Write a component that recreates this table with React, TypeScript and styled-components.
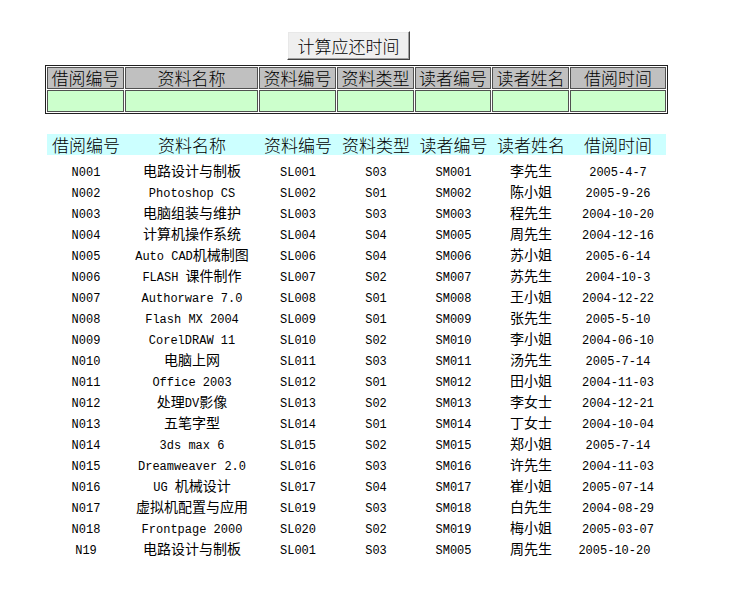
import React from 'react';
import styled, { createGlobalStyle } from 'styled-components';

const Global = createGlobalStyle`
  html, body { margin: 0; padding: 0; background: #ffffff; }
  body {
    font-family: "Noto Sans CJK SC", "Liberation Sans", sans-serif;
    color: #000000;
  }
`;

const Page = styled.div`
  width: 746px;
  min-height: 597px;
  box-sizing: border-box;
  padding: 31px 0 0 45px;
`;

const ButtonRow = styled.div`
  display: flex;
  padding-left: 242px;
`;

const CalcButton = styled.button`
  width: 123px;
  height: 29px;
  box-sizing: border-box;
  margin: 0;
  padding: 0;
  background: #efefef;
  border: 1px solid;
  border-color: #ffffff #404040 #404040 #ffffff;
  box-shadow: inset -1px -1px 0 #a0a0a0, inset 1px 1px 0 #e8e8e8;
  font-family: "Noto Sans CJK SC", sans-serif;
  font-weight: 300;
  font-size: 17px;
  line-height: 25px;
  color: #000;
`;

const topCols = '77px 133px 77px 77px 76px 77px 96px';
const listCols = '78px 134px 78px 78px 77px 78px 96px';

const FormTable = styled.div`
  display: grid;
  grid-template-columns: ${topCols};
  gap: 1px;
  padding: 1px;
  border: 1px solid #202020;
  width: max-content;
  margin-top: 5px;
`;

const FormCell = styled.div<{ $head?: boolean }>`
  box-sizing: border-box;
  height: 22px;
  border: 1px solid #505050;
  background: ${p => (p.$head ? '#c0c0c0' : '#ccffcc')};
  font-weight: 300;
  font-size: 17px;
  line-height: 20px;
  text-align: center;
  white-space: nowrap;
`;

const ListTable = styled.div`
  margin: 20px 0 0 2px;
  width: 619px;
`;

const ListHead = styled.div`
  display: grid;
  grid-template-columns: ${listCols};
  height: 21px;
  background: #ccffff;
`;

const HeadText = styled.div`
  font-weight: 300;
  font-size: 17px;
  line-height: 21px;
  text-align: center;
  white-space: nowrap;
`;

const ListBody = styled.div`
  padding-top: 5px;
`;

const ListRow = styled.div`
  display: grid;
  grid-template-columns: ${listCols};
  height: 21px;
`;

const DataCell = styled.div`
  font-size: 14px;
  line-height: 21px;
  text-align: center;
  white-space: pre;
`;

const Mono = styled.span`
  font-family: "Liberation Mono", monospace;
  font-size: 12px;
`;

const headers = ['借阅编号', '资料名称', '资料编号', '资料类型', '读者编号', '读者姓名', '借阅时间'];

const rows: string[][] = [
  ['N001', '电路设计与制板', 'SL001', 'S03', 'SM001', '李先生', '2005-4-7'],
  ['N002', 'Photoshop CS', 'SL002', 'S01', 'SM002', '陈小姐', '2005-9-26'],
  ['N003', '电脑组装与维护', 'SL003', 'S03', 'SM003', '程先生', '2004-10-20'],
  ['N004', '计算机操作系统', 'SL004', 'S04', 'SM005', '周先生', '2004-12-16'],
  ['N005', 'Auto CAD机械制图', 'SL006', 'S04', 'SM006', '苏小姐', '2005-6-14'],
  ['N006', 'FLASH 课件制作', 'SL007', 'S02', 'SM007', '苏先生', '2004-10-3'],
  ['N007', 'Authorware 7.0', 'SL008', 'S01', 'SM008', '王小姐', '2004-12-22'],
  ['N008', 'Flash MX 2004', 'SL009', 'S01', 'SM009', '张先生', '2005-5-10'],
  ['N009', 'CorelDRAW 11', 'SL010', 'S02', 'SM010', '李小姐', '2004-06-10'],
  ['N010', '电脑上网', 'SL011', 'S03', 'SM011', '汤先生', '2005-7-14'],
  ['N011', 'Office 2003', 'SL012', 'S01', 'SM012', '田小姐', '2004-11-03'],
  ['N012', '处理DV影像', 'SL013', 'S02', 'SM013', '李女士', '2004-12-21'],
  ['N013', '五笔字型', 'SL014', 'S01', 'SM014', '丁女士', '2004-10-04'],
  ['N014', '3ds max 6', 'SL015', 'S02', 'SM015', '郑小姐', '2005-7-14'],
  ['N015', 'Dreamweaver 2.0', 'SL016', 'S03', 'SM016', '许先生', '2004-11-03'],
  ['N016', 'UG 机械设计', 'SL017', 'S04', 'SM017', '崔小姐', '2005-07-14'],
  ['N017', '虚拟机配置与应用', 'SL019', 'S03', 'SM018', '白先生', '2004-08-29'],
  ['N018', 'Frontpage 2000', 'SL020', 'S02', 'SM019', '梅小姐', '2005-03-07'],
  ['N19', '电路设计与制板', 'SL001', 'S03', 'SM005', '周先生', '2005-10-20 '],
];

function Mixed({ text }: { text: string }) {
  const parts = text.split(/([\u0000-\u00ff]+)/).filter(s => s.length > 0);
  return (
    <>
      {parts.map((p, i) =>
        /^[\u0000-\u00ff]+$/.test(p) ? <Mono key={i}>{p}</Mono> : <span key={i}>{p}</span>
      )}
    </>
  );
}

export default function App() {
  return (
    <>
      <Global />
      <Page>
        <ButtonRow>
          <CalcButton type="button">计算应还时间</CalcButton>
        </ButtonRow>
        <FormTable>
          {headers.map(h => (
            <FormCell key={h} $head>{h}</FormCell>
          ))}
          {headers.map(h => (
            <FormCell key={'d' + h} />
          ))}
        </FormTable>
        <ListTable>
          <ListHead>
            {headers.map(h => (
              <HeadText key={h}>{h}</HeadText>
            ))}
          </ListHead>
          <ListBody>
            {rows.map((r, i) => (
              <ListRow key={i}>
                {r.map((c, j) => (
                  <DataCell key={j}>
                    <Mixed text={c} />
                  </DataCell>
                ))}
              </ListRow>
            ))}
          </ListBody>
        </ListTable>
      </Page>
    </>
  );
}
